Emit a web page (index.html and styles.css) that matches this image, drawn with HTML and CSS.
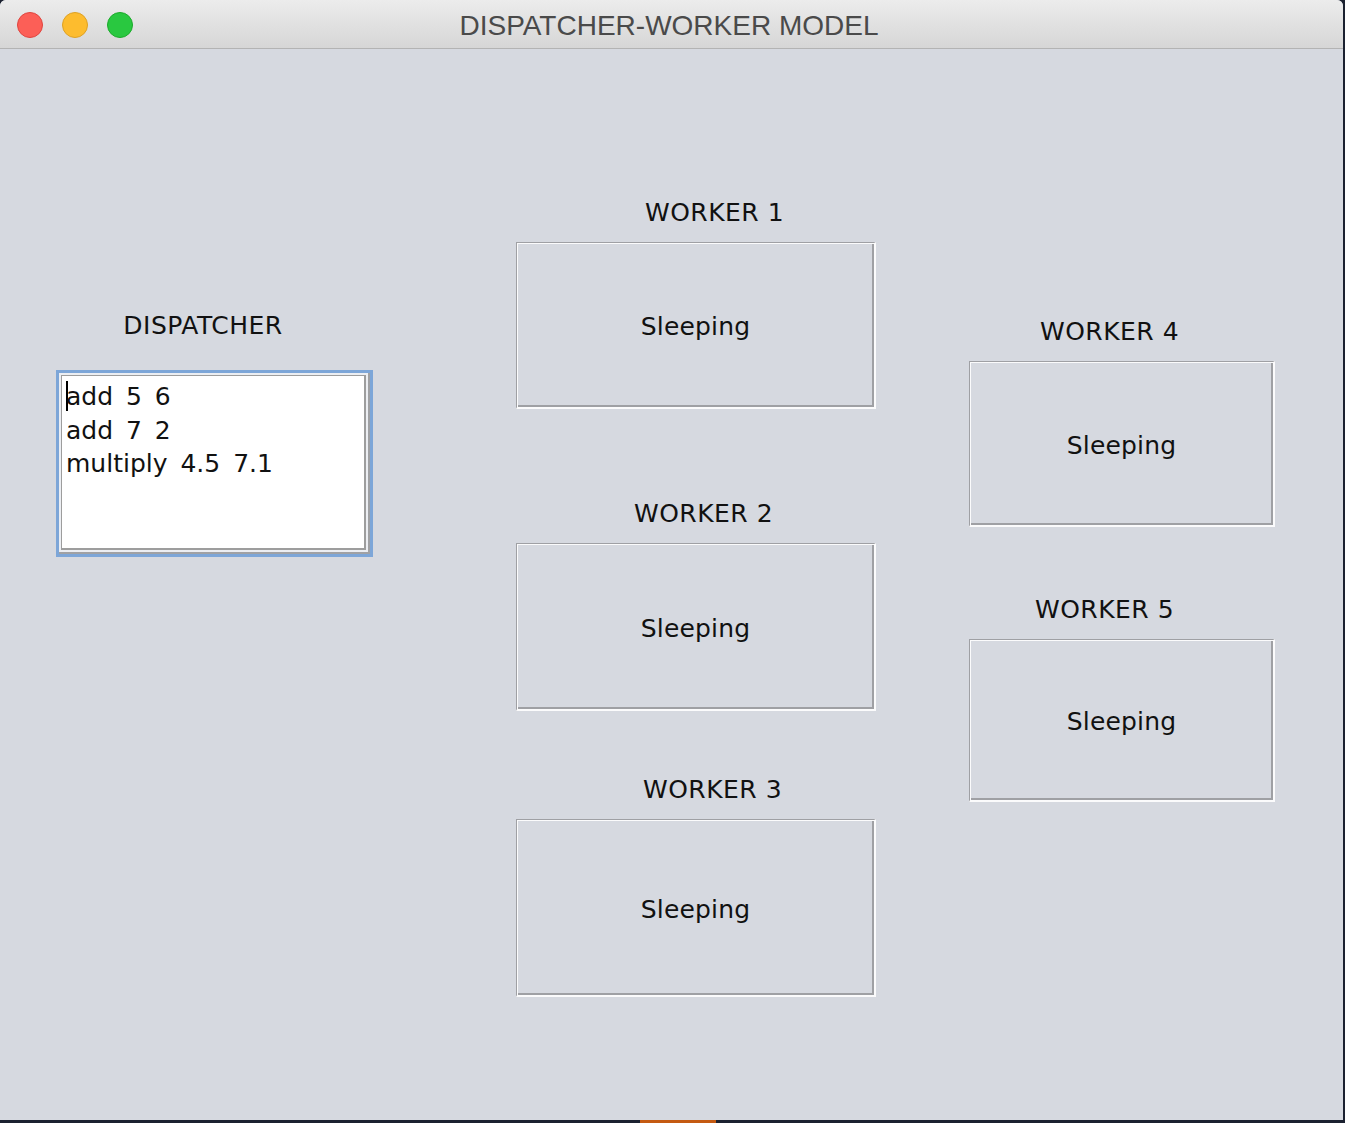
FILE: index.html
```html
<!DOCTYPE html>
<html>
<head>
<meta charset="utf-8">
<title>DISPATCHER-WORKER MODEL</title>
<link rel="stylesheet" href="styles.css">
</head>
<body>
<div class="window">
  <div class="titlebar">
    <div class="lights">
      <span class="light red"></span>
      <span class="light yellow"></span>
      <span class="light green"></span>
    </div>
    <div class="title">DISPATCHER-WORKER MODEL</div>
    <div></div>
  </div>
  <div class="content">
    <div class="col col-dispatcher">
      <div class="label label-dispatcher">DISPATCHER</div>
      <div class="focus">
        <div class="field">
          <div class="line"><span class="caret"></span>add 5 6</div>
          <div class="line">add 7 2</div>
          <div class="line">multiply 4.5 7.1</div>
        </div>
      </div>
    </div>
    <div class="col col-mid">
      <div class="label shift-w1">WORKER 1</div>
      <div class="box box-w1">Sleeping</div>
      <div class="label shift-w2">WORKER 2</div>
      <div class="box box-w2">Sleeping</div>
      <div class="label shift-w3">WORKER 3</div>
      <div class="box box-w3">Sleeping</div>
    </div>
    <div class="col col-right">
      <div class="label shift-w4">WORKER 4</div>
      <div class="box box-w4">Sleeping</div>
      <div class="label shift-w5">WORKER 5</div>
      <div class="box box-w5">Sleeping</div>
    </div>
  </div>
</div>
<div class="desktop-strip"><span class="dock-item"></span></div>
</body>
</html>
```
FILE: styles.css
```css
html, body {
  margin: 0;
  padding: 0;
}
body {
  background: #1b2130;
  width: 1345px;
  height: 1123px;
  overflow: hidden;
}
.window {
  width: 1343px;
  height: 1120px;
  background: #d6d9e0;
  border-radius: 6px 6px 0 0;
  overflow: hidden;
  display: flex;
  flex-direction: column;
}
.titlebar {
  height: 48px;
  flex: none;
  background: linear-gradient(#ececec, #d6d6d6);
  border-bottom: 1px solid #b3b3b3;
  display: grid;
  grid-template-columns: 1fr auto 1fr;
  align-items: center;
}
.lights {
  display: flex;
  gap: 19px;
  padding-left: 17px;
}
.light {
  width: 24px;
  height: 24px;
  border-radius: 50%;
  border: 1px solid;
}
.red { background: #fc5f57; border-color: #e0443e; }
.yellow { background: #fdbc2e; border-color: #dea123; }
.green { background: #29c840; border-color: #1aab29; }
.title {
  font-family: "Liberation Sans", Arial, sans-serif;
  font-size: 28px;
  color: #4a4a4a;
  line-height: 48px;
  padding-top: 2px;
  margin-right: 5px;
}
.content {
  flex: 1;
  display: flex;
  align-items: flex-start;
  padding-left: 56px;
}
.col {
  display: flex;
  flex-direction: column;
}
.col-dispatcher {
  width: 317px;
  margin-top: 262px;
}
.col-mid {
  width: 360px;
  margin-left: 143px;
  margin-top: 149px;
}
.col-right {
  width: 306px;
  margin-left: 93px;
  margin-top: 268px;
}
.label {
  font-family: "DejaVu Sans", "Lucida Grande", sans-serif;
  font-size: 25px;
  letter-spacing: 0.5px;
  line-height: 30px;
  height: 30px;
  color: #111;
  text-align: center;
  white-space: nowrap;
  margin-bottom: 14px;
}
.label-dispatcher {
  margin-bottom: 29px;
  padding-right: 23px;
}
.shift-w1 { padding-left: 37px; }
.shift-w2 { padding-left: 15px; }
.shift-w3 { padding-left: 33px; }
.shift-w4 { padding-right: 25px; }
.shift-w5 { padding-right: 35px; }
.box {
  box-sizing: border-box;
  border-style: solid;
  border-width: 1px 2px 2px 1px;
  border-color: #9fa0a4 #fbfbfc #fbfbfc #9fa0a4;
  box-shadow: inset 1px 1px 0 #fbfbfc, inset -2px -2px 0 #9fa0a4;
  display: flex;
  align-items: center;
  justify-content: center;
  font-family: "DejaVu Sans", "Lucida Grande", sans-serif;
  font-size: 25px;
  letter-spacing: 0.15px;
  color: #111;
  padding-top: 3px;
}
.box-w1 { height: 167px; margin-bottom: 90px; }
.box-w2 { height: 168px; margin-bottom: 64px; }
.box-w3 { height: 178px; }
.box-w4 { height: 166px; margin-bottom: 68px; }
.box-w5 { height: 163px; }
.focus {
  box-sizing: border-box;
  height: 187px;
  border: 3px solid #7da6d8;
  background: #eceef2;
  box-shadow: inset -2px -2px 0 #a0a1a4;
  padding: 2px 4px 4px 2px;
  display: flex;
}
.field {
  flex: 1;
  background: #fff;
  border-style: solid;
  border-color: #9d9d9d;
  border-width: 1px 2px 2px 1px;
  padding: 4px 3px 5px 4px;
  font-family: "DejaVu Sans", "Lucida Grande", sans-serif;
  font-size: 25px;
  word-spacing: 5px;
  line-height: 33.5px;
  color: #111;
}
.line {
  white-space: nowrap;
}
.caret {
  display: inline-block;
  width: 2px;
  height: 30px;
  background: #000;
  margin-right: -2px;
  vertical-align: -6px;
}
.desktop-strip {
  height: 3px;
  display: flex;
}
.dock-item {
  margin-left: 640px;
  width: 76px;
  background: #c45a12;
}
```
